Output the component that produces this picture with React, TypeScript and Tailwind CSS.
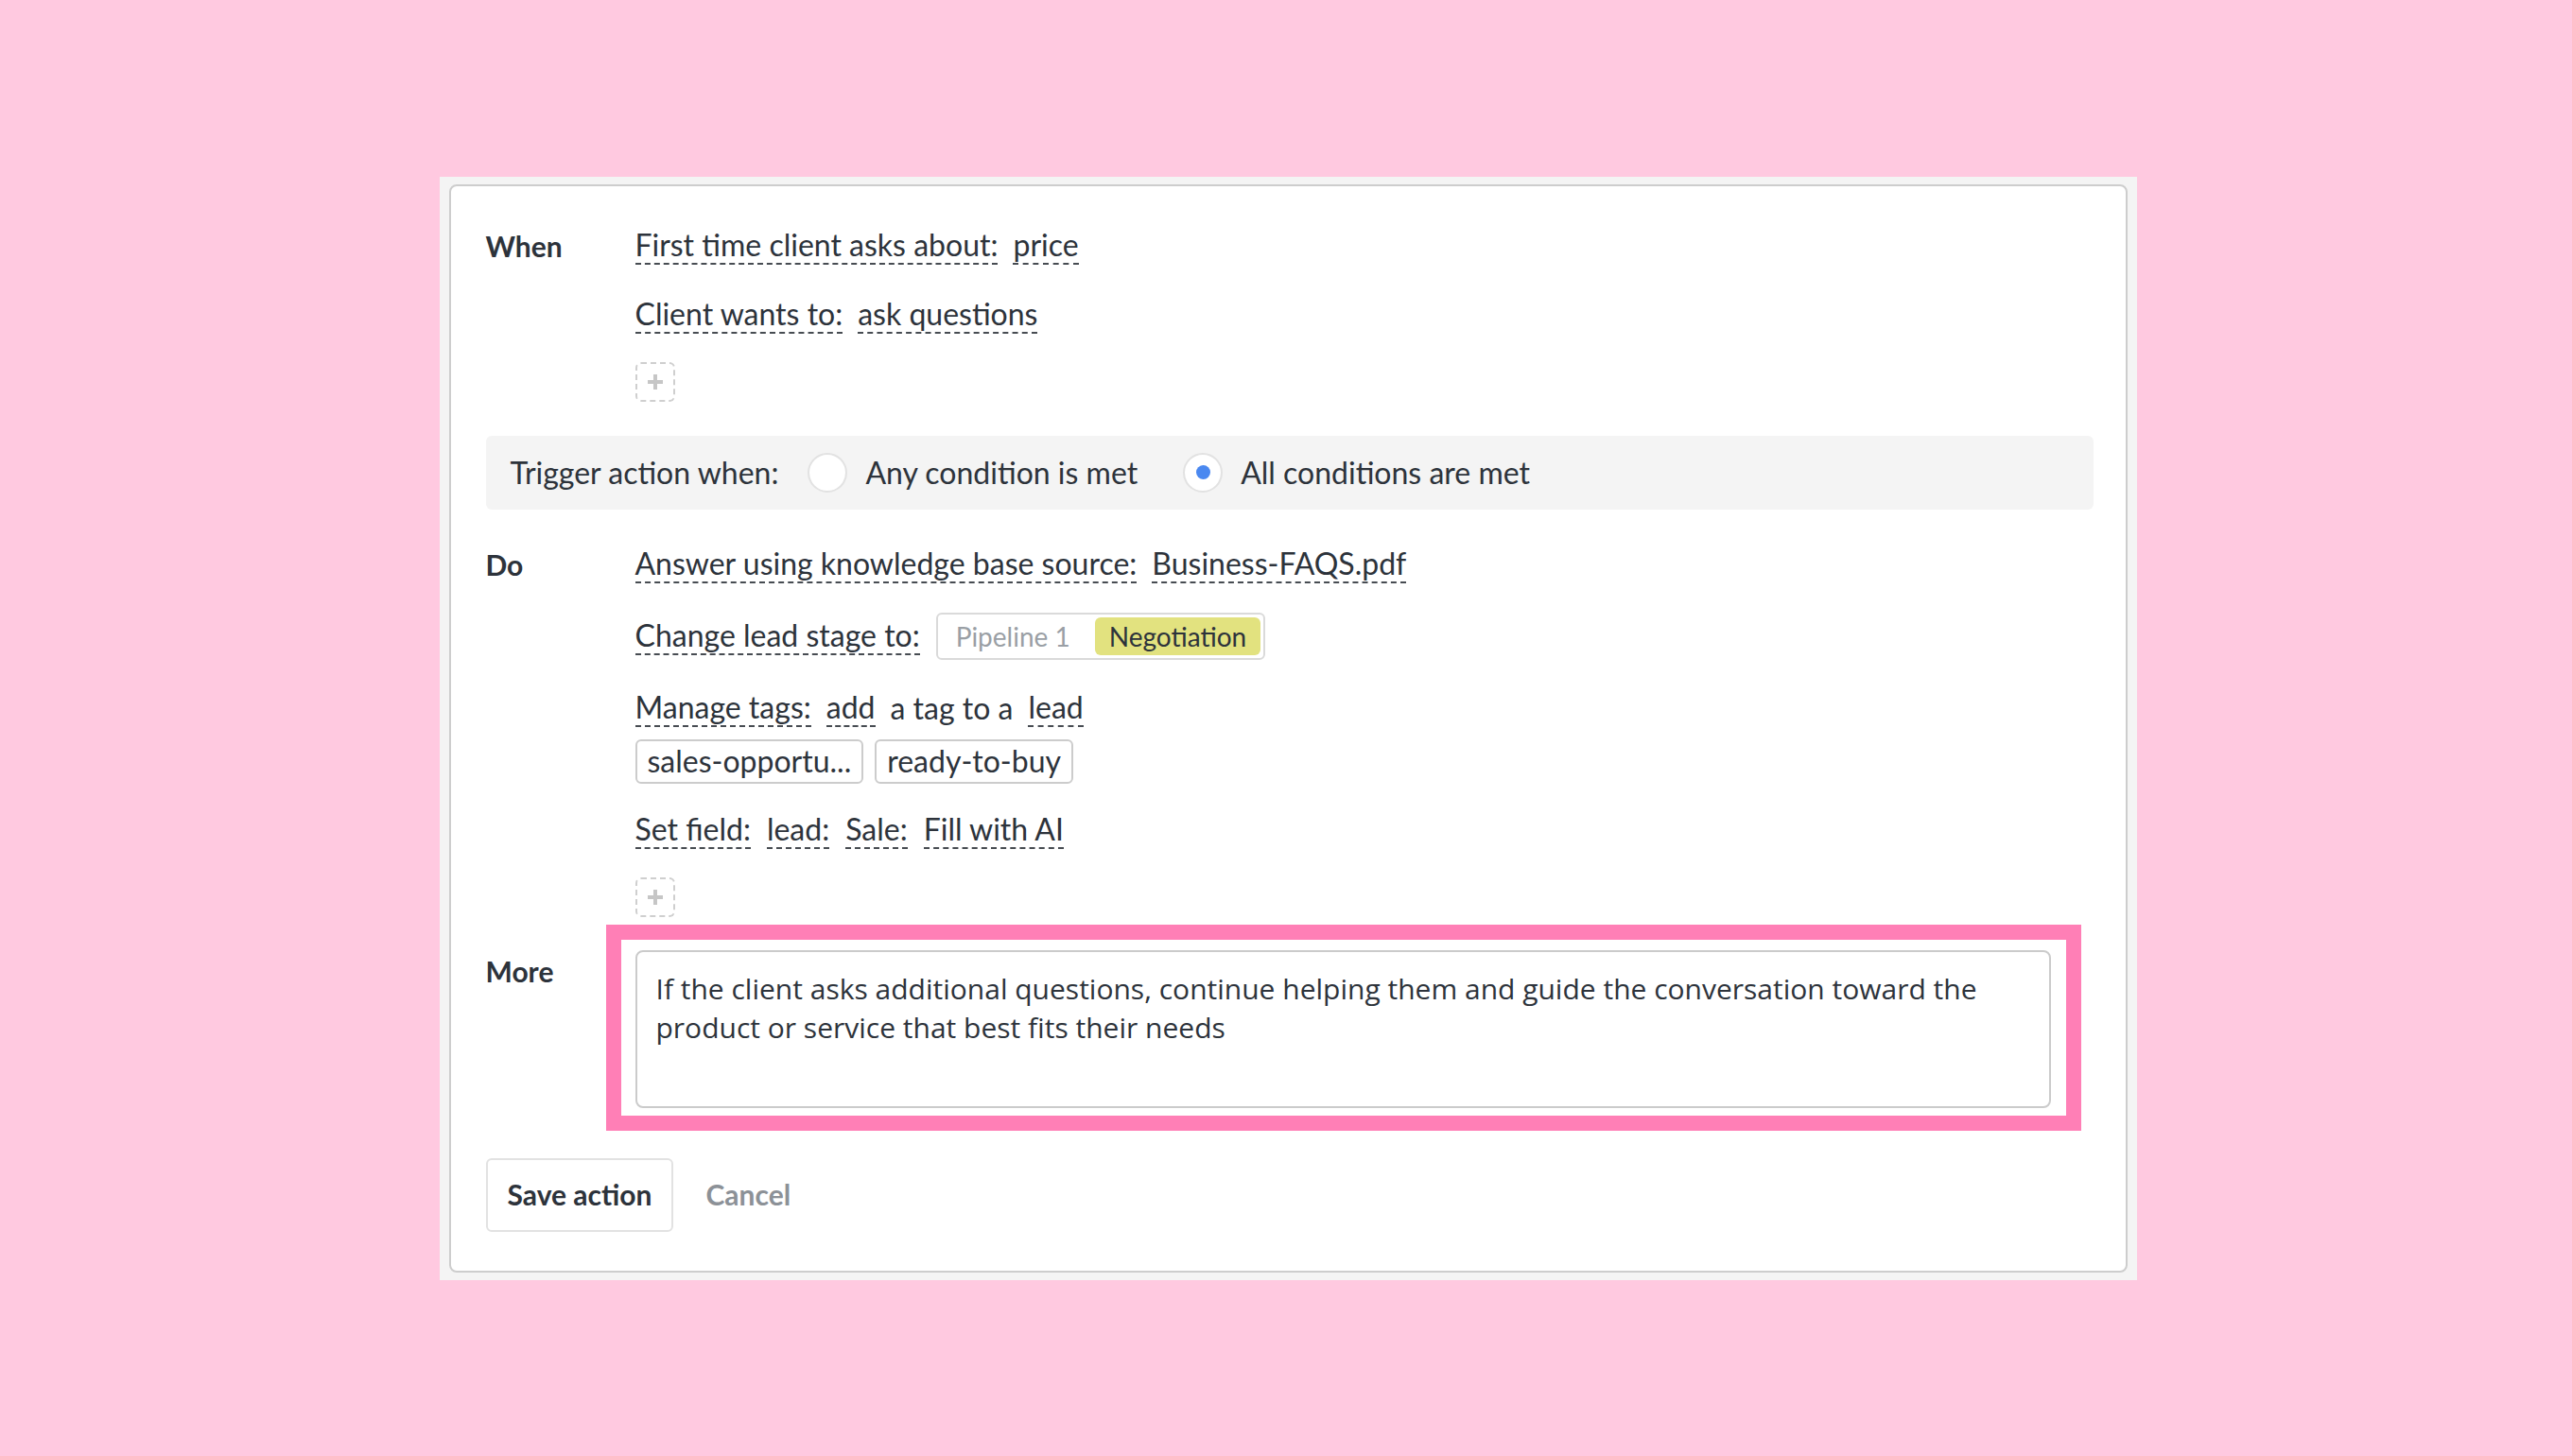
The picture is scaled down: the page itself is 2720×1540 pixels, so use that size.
import React from "react";

const font = { fontFamily: "Lato, 'Noto Sans', sans-serif" };

function Dashed({ children }: { children: React.ReactNode }) {
  return (
    <span className="inline-block border-b-2 border-dashed border-[#474c52] leading-[38px]">
      {children}
    </span>
  );
}

function PlusBox() {
  return (
    <div className="flex h-[42px] w-[42px] items-center justify-center rounded-md border-2 border-dashed border-[#cfcfcf]">
      <svg width="18" height="18" viewBox="0 0 18 18">
        <path d="M9 1v16M1 9h16" stroke="#c6c6c6" strokeWidth="4" />
      </svg>
    </div>
  );
}

function Radio({ checked }: { checked?: boolean }) {
  return (
    <span className="flex h-[42px] w-[42px] shrink-0 items-center justify-center rounded-full border-2 border-[#e2e2e2] bg-white">
      {checked && <span className="h-[15px] w-[15px] rounded-full bg-[#4a88f0]" />}
    </span>
  );
}

function Tag({ children }: { children: React.ReactNode }) {
  return (
    <span className="flex h-[47px] items-center rounded-md border-2 border-[#cccccc] px-[11px]">
      {children}
    </span>
  );
}

export default function App() {
  return (
    <div
      className="flex min-h-[1540px] w-full items-center justify-center bg-[#ffc9e0] pl-[4px] text-[32px] text-[#2d333b]"
      style={font}
    >
      <div className="w-[1795px] bg-[#f4f4f4] px-[10px] py-[8px]">
        <div className="rounded-lg border-2 border-[#cdcdcd] bg-white pb-[41px] pl-[37px] pr-[34px] pt-[41px]">
          {/* When */}
          <div className="grid grid-cols-[158px_1fr]">
            <div className="text-[30px] font-bold leading-[44px]">When</div>
            <div className="flex flex-col items-start">
              <div className="flex h-[44px] items-center gap-[16px]">
                <Dashed>First time client asks about:</Dashed>
                <Dashed>price</Dashed>
              </div>
              <div className="mt-[29px] flex h-[44px] items-center gap-[16px]">
                <Dashed>Client wants to:</Dashed>
                <Dashed>ask questions</Dashed>
              </div>
              <div className="mt-[28px]">
                <PlusBox />
              </div>
            </div>
          </div>

          {/* Trigger */}
          <div className="mt-[36px] flex h-[78px] items-center rounded-md bg-[#f4f4f4] px-[26px]">
            <span>Trigger action when:</span>
            <span className="ml-[31px] flex items-center gap-[19px]">
              <Radio />
              <span>Any condition is met</span>
            </span>
            <span className="ml-[48px] flex items-center gap-[19px]">
              <Radio checked />
              <span>All conditions are met</span>
            </span>
          </div>

          {/* Do */}
          <div className="mt-[36px] grid grid-cols-[158px_1fr]">
            <div className="text-[30px] font-bold leading-[44px]">Do</div>
            <div className="flex flex-col items-start">
              <div className="flex h-[44px] items-center gap-[16px]">
                <Dashed>Answer using knowledge base source:</Dashed>
                <Dashed>Business-FAQS.pdf</Dashed>
              </div>
              <div className="mt-[32px] flex h-[44px] items-center gap-[17px]">
                <Dashed>Change lead stage to:</Dashed>
                <span className="flex h-[50px] items-center rounded-md border-2 border-[#dadada] pl-[19px] pr-[3px] text-[28px]">
                  <span className="text-[#9a9fa5]">Pipeline 1</span>
                  <span className="ml-[26px] flex h-[40px] items-center rounded-md bg-[#e2e27f] px-[15px]">
                    Negotiation
                  </span>
                </span>
              </div>
              <div className="mt-[32px] flex h-[44px] items-center gap-[16px]">
                <Dashed>Manage tags:</Dashed>
                <Dashed>add</Dashed>
                <span className="leading-[38px]">a tag to a</span>
                <Dashed>lead</Dashed>
              </div>
              <div className="mt-[11px] flex gap-[12px]">
                <Tag>sales-opportu...</Tag>
                <Tag>ready-to-buy</Tag>
              </div>
              <div className="mt-[27px] flex h-[44px] items-center gap-[17px]">
                <Dashed>Set field:</Dashed>
                <Dashed>lead:</Dashed>
                <Dashed>Sale:</Dashed>
                <Dashed>Fill with AI</Dashed>
              </div>
              <div className="mt-[28px]">
                <PlusBox />
              </div>
            </div>
          </div>

          {/* More */}
          <div className="mt-[8px] grid grid-cols-[158px_1fr]">
            <div className="pt-[27px] text-[30px] font-bold leading-[44px]">More</div>
            <div className="-ml-[31px] w-[1560px] border-[16px] border-[#ff7fb6] bg-white pb-[8px] pl-[15px] pr-[16px] pt-[11px]">
              <div
                className="h-[167px] rounded-lg border-2 border-[#cbcbcb] pl-[20px] pr-[16px] pt-[18px] text-[30px] leading-[41px]"
                style={{ fontFamily: "'Open Sans', 'Noto Sans', sans-serif" }}
              >
                If the client asks additional questions, continue helping them and guide the conversation toward the
                product or service that best fits their needs
              </div>
            </div>
          </div>

          {/* Buttons */}
          <div className="mt-[29px] flex items-center">
            <button className="flex h-[78px] items-center rounded-md border-2 border-[#e2e2e2] px-[21px] text-[30px] font-bold">
              Save action
            </button>
            <button className="ml-[34px] text-[30px] font-bold text-[#8c9197]">Cancel</button>
          </div>
        </div>
      </div>
    </div>
  );
}
